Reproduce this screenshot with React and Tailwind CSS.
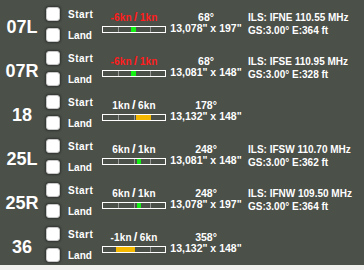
import React from "react";

const runways = [
  { id: "07L", from: "-6kn", to: "1kn", warn: true, fill: { left: 28, width: 5, color: "bg-[#14f014]" }, hdg: "68°", dims: '13,078" x 197"', ils: "ILS: IFNE 110.55 MHz", gs: "GS:3.00° E:364 ft" },
  { id: "07R", from: "-6kn", to: "1kn", warn: true, fill: { left: 28, width: 5, color: "bg-[#14f014]" }, hdg: "68°", dims: '13,081" x 148"', ils: "ILS: IFSE 110.95 MHz", gs: "GS:3.00° E:328 ft" },
  { id: "18", from: "1kn", to: "6kn", fill: { left: 33, width: 15, color: "bg-[#f5b800]" }, hdg: "178°", dims: '13,132" x 148"' },
  { id: "25L", from: "6kn", to: "1kn", fill: { left: 34, width: 4, color: "bg-[#14f014]" }, hdg: "248°", dims: '13,081" x 148"', ils: "ILS: IFSW 110.70 MHz", gs: "GS:3.00° E:362 ft" },
  { id: "25R", from: "6kn", to: "1kn", fill: { left: 34, width: 4, color: "bg-[#14f014]" }, hdg: "248°", dims: '13,078" x 197"', ils: "ILS: IFNW 109.50 MHz", gs: "GS:3.00° E:364 ft" },
  { id: "36", from: "-1kn", to: "6kn", fill: { left: 13, width: 19, color: "bg-[#f5b800]" }, hdg: "358°", dims: '13,132" x 148"' },
];

function Box() {
  return <div className="w-[14px] h-[14px] rounded-[3px] bg-white border border-[#c8c8c8] shadow-[0_0_2px_1px_rgba(0,0,0,0.35)]" />;
}

function WindBar({ fill }) {
  return (
    <div className="relative w-[64px] h-[7px] border border-white">
      <div className="absolute top-0 bottom-0 left-[15px] w-px bg-[#9a9a9a]" />
      <div className="absolute top-0 bottom-0 left-[31px] w-px bg-[#9a9a9a]" />
      <div className="absolute top-0 bottom-0 left-[47px] w-px bg-[#9a9a9a]" />
      <div className={`absolute top-0 bottom-0 ${fill.color}`} style={{ left: fill.left, width: fill.width }} />
    </div>
  );
}

function Row({ r }) {
  return (
    <div className="flex h-[44px]">
      <div className="w-[44px] pt-[17px] text-center text-[18px] leading-[20px] font-bold text-white">{r.id}</div>
      <div className="w-[58px] pl-[2px] pt-[7px] flex flex-col gap-[7px]">
        <div className="flex items-center h-[14px]">
          <Box />
          <span className="ml-[8px] text-[10px] font-bold text-white tracking-[0.5px]">Start</span>
        </div>
        <div className="flex items-center h-[14px]">
          <Box />
          <span className="ml-[8px] text-[10px] font-bold text-white">Land</span>
        </div>
      </div>
      <div className="w-[64px] pt-[11px] flex flex-col items-center">
        <div className={`h-[12px] leading-[12px] text-[10px] font-bold whitespace-nowrap tracking-[0.2px] ${r.warn ? "text-[#ff1c1c]" : "text-white"}`}>
          {r.from}
          <span className="text-[13px] mx-[2px]">/</span>
          {r.to}
        </div>
        <div className="mt-[3px]">
          <WindBar fill={r.fill} />
        </div>
      </div>
      <div className="w-[80px] pt-[12px] flex flex-col items-center text-[10.5px] leading-[11px] font-bold text-white whitespace-nowrap">
        <div>{r.hdg}</div>
        <div>{r.dims}</div>
      </div>
      {r.ils && (
        <div className="pl-[2px] pt-[11px] text-[10px] leading-[13px] font-bold text-white whitespace-nowrap">
          <div>{r.ils}</div>
          <div>{r.gs}</div>
        </div>
      )}
    </div>
  );
}

export default function App() {
  return (
    <div className="w-[364px] h-[270px] bg-[#f1f1ef] overflow-hidden" style={{ fontFamily: '"Liberation Sans", Arial, sans-serif' }}>
      <div className="h-[265px] bg-[#4b5049] flex flex-col">
        {runways.map((r) => (
          <Row key={r.id} r={r} />
        ))}
      </div>
    </div>
  );
}
